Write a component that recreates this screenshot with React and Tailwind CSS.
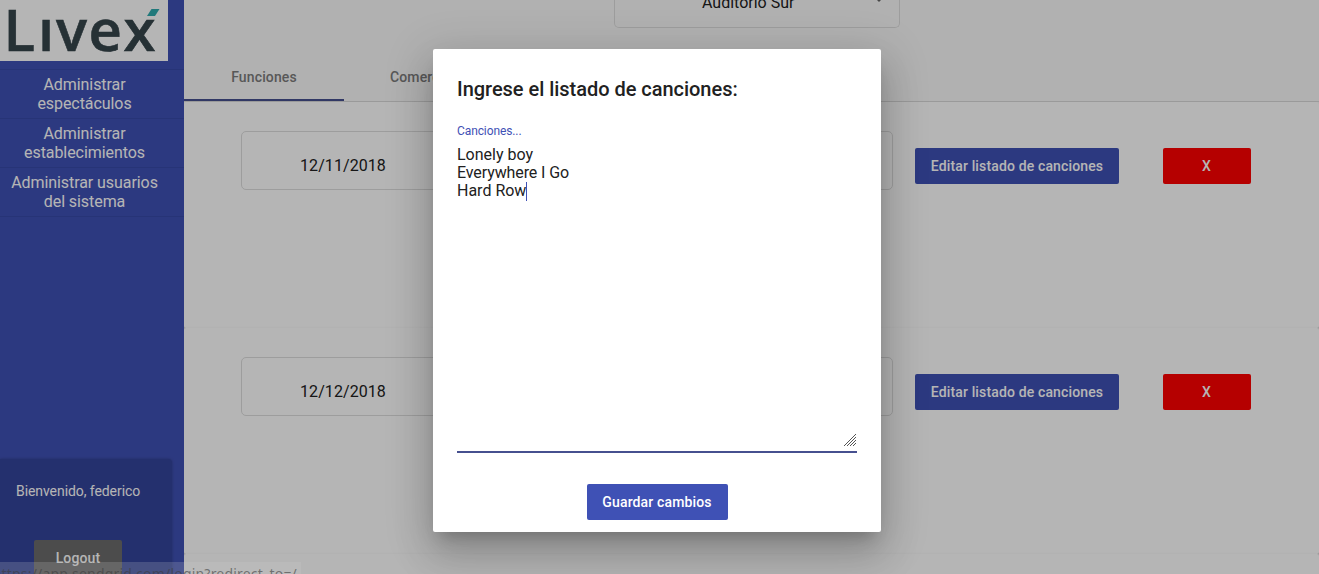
import React from 'react';

const menu = [
  ['Administrar', 'espectáculos'],
  ['Administrar', 'establecimientos'],
  ['Administrar usuarios', 'del sistema'],
];

function Logo() {
  return (
    <svg className="block h-[61px] w-[168px] bg-white" viewBox="0 0 168 61" role="img" aria-label="Livex">
      <text
        x="3.5 38 56 88.500 123.500"
        y="51"
        fontFamily="Open Sans, sans-serif"
        fontWeight="600"
        fontSize="58"
        fill="#36454b"
        stroke="#36454b"
        strokeWidth="0.6"
      >
        Lıvex
      </text>
      <path d="M151.500 9h8l-4.500 7h-8z" fill="#2fabae" />
    </svg>
  );
}

function Sidebar() {
  return (
    <aside className="flex h-full w-[184px] shrink-0 flex-col bg-[#3f51b5] text-white">
      <Logo />
      <nav className="mt-2 border-t border-[#384aa8]">
        {menu.map(([a, b]) => (
          <a
            key={b}
            className="block border-b border-[#384aa8] py-[5px] pr-[15px] text-center text-base leading-[19px] tracking-[-0.07px]"
          >
            {a}
            <br />
            {b}
          </a>
        ))}
      </nav>
      <div className="mt-auto flex h-[115px] w-[172px] shrink-0 flex-col items-start rounded-tr bg-[#34449b] pt-6 shadow-[0_0_3px_rgba(0,0,0,0.25)]">
        <p className="ml-4 text-sm leading-4 tracking-[-0.07px]">Bienvenido, federico</p>
        <button className="mt-[41px] ml-[34px] h-9 w-[88px] shrink-0 rounded-[2px] bg-[#6c6c6c] text-sm font-medium tracking-[0.14px]">
          Logout
        </button>
      </div>
    </aside>
  );
}

function Row({ date }) {
  return (
    <div className="flex h-[226px] shrink-0 items-start rounded-[2px] bg-white pt-[29px] pl-[57px] shadow-[0_1px_3px_rgba(0,0,0,0.12),0_1px_1px_rgba(0,0,0,0.14)]">
      <div className="flex h-[59px] w-[315px] items-center rounded-[5px] border border-[#dedede] pt-[10px] pl-[58px] text-base tracking-[0.08px]">
        <span>{date}</span>
      </div>
      <div className="ml-[22px] h-[59px] w-[315px] rounded-[5px] border border-[#dedede]" />
      <button className="mt-[17px] ml-[22px] h-9 w-[204px] rounded-[2px] bg-[#3f51b5] text-sm font-medium tracking-[0.14px] text-white">
        Editar listado de canciones
      </button>
      <button className="mt-[17px] ml-11 h-9 w-[88px] rounded-[2px] bg-[#ff0000] pr-px text-sm font-medium text-white">
        X
      </button>
    </div>
  );
}

function Dialog() {
  return (
    <section className="flex h-[483px] w-[448px] flex-col items-start rounded-[2px] bg-white px-6 pt-6 shadow-[0_11px_15px_-7px_rgba(0,0,0,0.2),0_24px_38px_3px_rgba(0,0,0,0.14),0_9px_46px_8px_rgba(0,0,0,0.12)]">
      <h2 className="text-[20px] leading-8 font-medium tracking-[-0.03px]">Ingrese el listado de canciones:</h2>
      <label className="mt-[18px] text-xs leading-4 tracking-[-0.1px] text-[#3f51b5]">Canciones...</label>
      <div className="mt-[7px] flex h-[307px] w-full flex-col border-b-2 border-[#46508f] text-base leading-[18px]">
        <span>Lonely boy</span>
        <span className="tracking-[-0.1px]">Everywhere I Go</span>
        <span className="flex h-[18px] items-center">
          Hard Row
          <i className="h-[19px] w-px bg-[#3f51b5]" />
        </span>
        <svg className="mt-auto mr-px mb-[5px] h-3 w-3 self-end" viewBox="0 0 12 12" stroke="#555" strokeWidth="1">
          <path d="M0 12L12 0M3 12L12 3M6 12L12 6M9 12L12 9" />
        </svg>
      </div>
      <button className="mt-[31px] h-9 w-[141px] self-center rounded-[2px] bg-[#3f51b5] text-sm font-medium tracking-[0.14px] text-white">
        Guardar cambios
      </button>
    </section>
  );
}

export default function App() {
  return (
    <div className="relative flex h-[574px] w-[1319px] overflow-hidden bg-[#fafafa] font-[Roboto,sans-serif] text-[#212121]">
      <Sidebar />
      <main className="flex min-w-0 flex-1 flex-col overflow-hidden">
        <div className="ml-[430px] flex h-7 w-[286px] items-end rounded-b-[5px] border border-t-0 border-[#dedede]">
          <span className="mb-[14px] ml-[87px] text-base leading-5">Auditorio Sur</span>
          <svg className="mb-[25px] ml-[80px] h-[5px] w-[10px]" viewBox="0 0 10 5">
            <path d="M0 0h10L5 5z" fill="#666" />
          </svg>
        </div>
        <div className="mt-[25px] flex h-[49px] shrink-0 border-b border-[#dedede] text-sm font-medium tracking-[0.14px] text-[#7c7c7c]">
          <div className="flex h-12 w-40 items-center justify-center border-b-2 border-[#46508f] pt-px">Funciones</div>
          <div className="flex w-40 items-center pb-px pl-[46px]">Comercios</div>
        </div>
        <Row date="12/11/2018" />
        <Row date="12/12/2018" />
        <Row date="" />
      </main>
      <div className="absolute inset-0 flex items-start justify-center bg-black/29 pt-[49px] pr-[5px]">
        <Dialog />
      </div>
      <div className="absolute bottom-0 left-0 flex h-3 w-[301px] justify-end overflow-hidden bg-[#d0d0d0]/20 pr-1 font-['Noto_Sans',sans-serif] text-[14px] leading-[23px] tracking-[0.2px] whitespace-nowrap text-[#3c3c3c]/60">
        https://app.sendgrid.com/login?redirect_to=/
      </div>
    </div>
  );
}
